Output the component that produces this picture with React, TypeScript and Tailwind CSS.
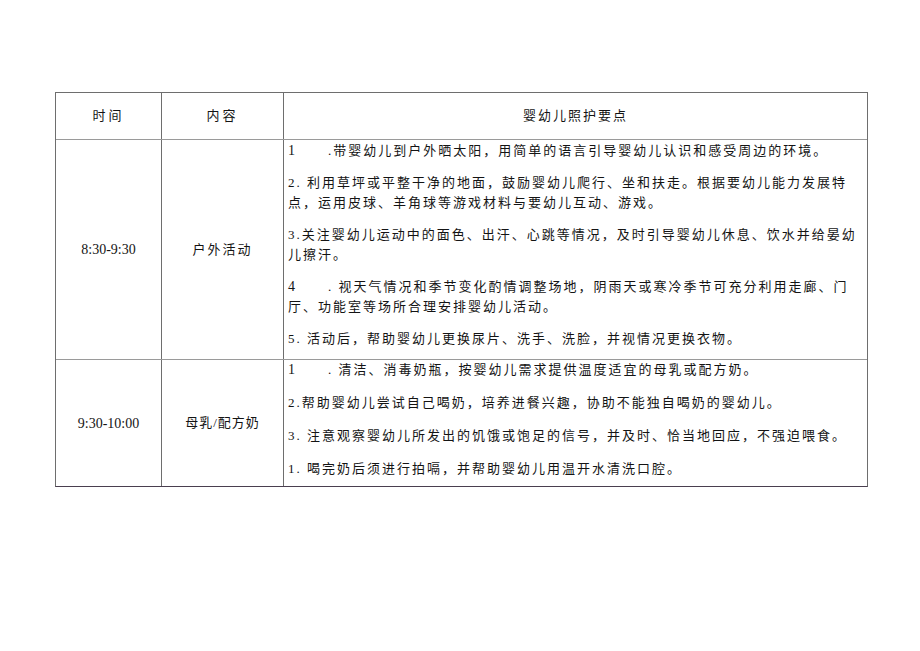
const FONT = "font-['Liberation_Serif','Noto_Sans_CJK_SC',serif]";

type Para = { num?: string; lines: string[] };

const outdoor: Para[] = [
  { num: '1', lines: ['.带婴幼儿到户外晒太阳，用简单的语言引导婴幼儿认识和感受周边的环境。'] },
  {
    lines: [
      '2. 利用草坪或平整干净的地面，鼓励婴幼儿爬行、坐和扶走。根据要幼儿能力发展特',
      '点，运用皮球、羊角球等游戏材料与要幼儿互动、游戏。',
    ],
  },
  {
    lines: [
      '3.关注婴幼儿运动中的面色、出汗、心跳等情况，及时引导婴幼儿休息、饮水并给晏幼',
      '儿擦汗。',
    ],
  },
  {
    num: '4',
    lines: [
      '. 视天气情况和季节变化酌情调整场地，阴雨天或寒冷季节可充分利用走廊、门',
      '厅、功能室等场所合理安排婴幼儿活动。',
    ],
  },
  { lines: ['5. 活动后，帮助婴幼儿更换尿片、洗手、洗脸，并视情况更换衣物。'] },
];

const milk: Para[] = [
  { num: '1', lines: ['. 清洁、消毒奶瓶，按婴幼儿需求提供温度适宜的母乳或配方奶。'] },
  { lines: ['2.帮助婴幼儿尝试自己喝奶，培养进餐兴趣，协助不能独自喝奶的婴幼儿。'] },
  { lines: ['3. 注意观察婴幼儿所发出的饥饿或饱足的信号，并及时、恰当地回应，不强迫喂食。'] },
  { lines: ['1. 喝完奶后须进行拍嗝，并帮助婴幼儿用温开水清洗口腔。'] },
];

function Paragraphs({ items, gap }: { items: Para[]; gap: string }) {
  return (
    <div className={`flex flex-col ${gap}`}>
      {items.map((p, i) => (
        <div key={i} className="flex flex-col">
          {p.lines.map((line, j) => (
            <p key={j} className="leading-[20px] tracking-[2px] whitespace-nowrap">
              {j === 0 && p.num && (
                <span className="inline-block w-[40px] tracking-normal text-[14px]">{p.num}</span>
              )}
              {line}
            </p>
          ))}
        </div>
      ))}
    </div>
  );
}

export default function App() {
  return (
    <div className={`w-[920px] h-[651px] bg-white text-[#141414] text-[13px] ${FONT}`}>
      <div className="pt-[92px] pl-[55px]">
        <div className="w-[813px] border border-[#6e6e6e] border-b-[#4a3f4f]">
          {/* header */}
          <div className="flex h-[47px] border-b border-[#9a9a9a]">
            <div className="w-[106px] shrink-0 flex items-center justify-center border-r border-[#6e6e6e] tracking-[3px]">时间</div>
            <div className="w-[122px] shrink-0 flex items-center justify-center border-r border-[#6e6e6e] tracking-[3px]">内容</div>
            <div className="flex-1 flex items-center justify-center tracking-[2px]">婴幼儿照护要点</div>
          </div>
          {/* outdoor row */}
          <div className="flex h-[220px] border-b border-[#9a9a9a]">
            <div className="w-[106px] shrink-0 flex items-center justify-center border-r border-[#6e6e6e] text-[14px]">8:30-9:30</div>
            <div className="w-[122px] shrink-0 flex items-center justify-center border-r border-[#6e6e6e] tracking-[2px]">户外活动</div>
            <div className="flex-1 pl-[4px] pt-[1px]">
              <Paragraphs items={outdoor} gap="gap-[12px]" />
            </div>
          </div>
          {/* milk row */}
          <div className="flex h-[126px]">
            <div className="w-[106px] shrink-0 flex items-center justify-center border-r border-[#6e6e6e] text-[14px]">9:30-10:00</div>
            <div className="w-[122px] shrink-0 flex items-center justify-center border-r border-[#6e6e6e] tracking-[1px]">母乳/配方奶</div>
            <div className="flex-1 pl-[4px]">
              <Paragraphs items={milk} gap="gap-[13px]" />
            </div>
          </div>
        </div>
      </div>
    </div>
  );
}
